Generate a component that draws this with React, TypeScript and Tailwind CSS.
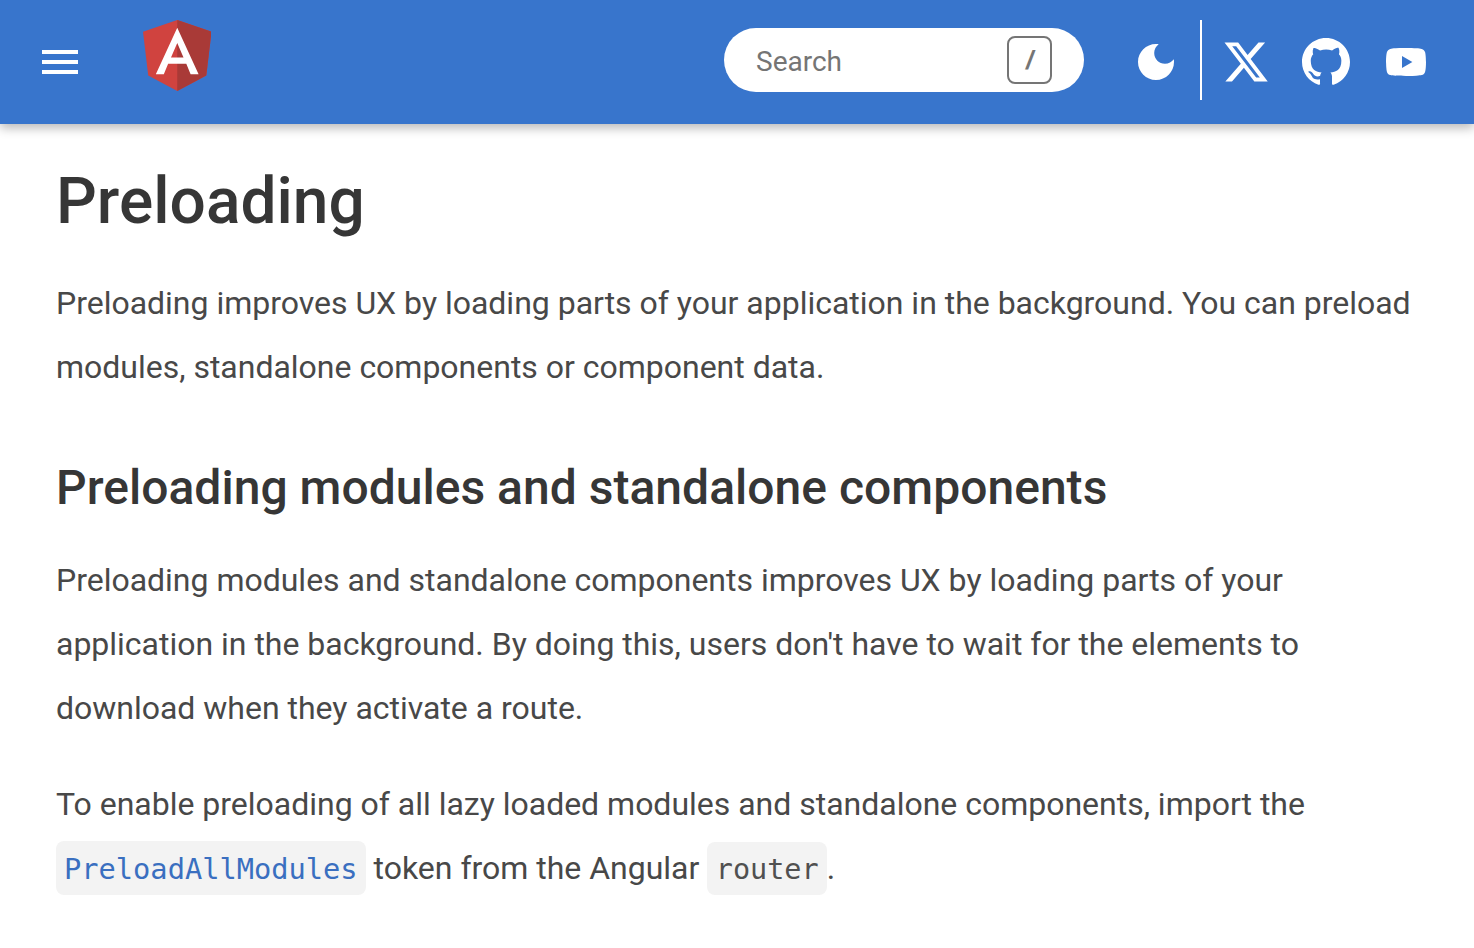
export default function App() {
  return (
    <div className="min-h-[948px] bg-white font-['Roboto',sans-serif] text-[#484848]">
      <header className="flex h-[124px] items-center bg-[#3875cc] pl-[42px] pr-[44px] shadow-[0_4px_10px_rgba(0,0,0,0.28)]">
        <div className="flex w-[36px] flex-col gap-[6px]">
          <span className="h-[4px] bg-white" />
          <span className="h-[4px] bg-white" />
          <span className="h-[4px] bg-white" />
        </div>
        <svg viewBox="31.9 30 186.2 200" preserveAspectRatio="none" className="mb-[14px] ml-[64.5px] h-[71px] w-[68.5px]">
          <polygon fill="#d0433f" points="125,30 31.9,63.2 46.1,186.3 125,230 203.9,186.3 218.1,63.2" />
          <polygon fill="#a93a37" points="125,30 125,230 203.9,186.3 218.1,63.2" />
          <path fill="#fff" fillRule="evenodd" d="M125,52.1L66.8,182.6h21.7l11.7-29.2h49.4l11.7,29.2h21.7L125,52.1z M142,135.4H108l17-40.9L142,135.4z" />
        </svg>
        <div className="mb-[4px] ml-[513px] flex h-[64px] w-[360px] items-center justify-between rounded-full bg-white pl-[32px] pr-[32px]">
          <span className="pt-[4px] text-[28px] text-[#757575]">Search</span>
          <span className="flex h-[48px] w-[45px] items-center justify-center rounded-[8px] border-2 border-[#757575] font-['Liberation_Sans',sans-serif] text-[26px] font-bold italic text-[#757575]">/</span>
        </div>
        <svg viewBox="0 0 24 24" className="ml-[48px] h-[48px] w-[48px] fill-white">
          <path d="M12 3c-4.97 0-9 4.03-9 9s4.03 9 9 9 9-4.03 9-9c0-.46-.04-.92-.1-1.36-.98 1.37-2.58 2.26-4.4 2.26-2.98 0-5.4-2.42-5.4-5.4 0-1.81.89-3.42 2.26-4.4-.44-.06-.9-.1-1.36-.1z" />
        </svg>
        <span className="mb-[4px] ml-[20px] h-[80px] w-[2px] bg-white" />
        <svg viewBox="0 0 512 512" className="ml-[20px] h-[48px] w-[48px] fill-white">
          <path d="M389.2 48h70.6L305.6 224.2 487.8 464H345L233.7 318.6 106.5 464H35.8L200.7 275.5 26.8 48H172.4L272.9 180.9 389.2 48zM364.4 421.8h39.1L151.1 88h-42L364.4 421.8z" />
        </svg>
        <svg viewBox="0 0 16 16" className="ml-[32px] h-[48px] w-[48px] fill-white">
          <path d="M8 0C3.58 0 0 3.58 0 8c0 3.54 2.29 6.53 5.47 7.59.4.07.55-.17.55-.38 0-.19-.01-.82-.01-1.49-2.01.37-2.53-.49-2.69-.94-.09-.23-.48-.94-.82-1.13-.28-.15-.68-.52-.01-.53.63-.01 1.08.58 1.23.82.72 1.21 1.87.87 2.33.66.07-.52.28-.87.51-1.07-1.78-.2-3.64-.89-3.64-3.95 0-.87.31-1.59.82-2.15-.08-.2-.36-1.02.08-2.12 0 0 .67-.21 2.2.82.64-.18 1.32-.27 2-.27.68 0 1.36.09 2 .27 1.53-1.04 2.2-.82 2.2-.82.44 1.1.16 1.92.08 2.12.51.56.82 1.27.82 2.15 0 3.07-1.87 3.75-3.65 3.95.29.25.54.73.54 1.48 0 1.07-.01 1.93-.01 2.2 0 .21.15.46.55.38A8.013 8.013 0 0016 8c0-4.42-3.58-8-8-8z" />
        </svg>
        <svg viewBox="0 0 24 24" className="ml-[32px] h-[48px] w-[48px] fill-white">
          <path d="M10,15L15.19,12L10,9V15M21.56,7.17C21.69,7.64 21.78,8.27 21.84,9.07C21.91,9.87 21.94,10.56 21.94,11.16L22,12C22,14.19 21.84,15.8 21.56,16.83C21.31,17.73 20.73,18.31 19.83,18.56C19.36,18.69 18.5,18.78 17.18,18.84C15.88,18.91 14.69,18.94 13.59,18.94L12,19C7.81,19 5.2,18.84 4.17,18.56C3.27,18.31 2.69,17.73 2.44,16.83C2.31,16.36 2.22,15.73 2.16,14.93C2.09,14.13 2.06,13.44 2.06,12.84L2,12C2,9.81 2.16,8.2 2.44,7.17C2.69,6.27 3.27,5.69 4.17,5.44C4.64,5.31 5.5,5.22 6.82,5.16C8.12,5.09 9.31,5.06 10.41,5.06L12,5C16.19,5 18.8,5.16 19.83,5.44C20.73,5.69 21.31,6.27 21.56,7.17Z" />
        </svg>
      </header>
      <main className="px-[56px] text-[32px] leading-[64px] tracking-[-0.012px]">
        <h1 className="pt-[38px] text-[64px] font-medium leading-[80px] tracking-[0.02px] text-[#363636]">Preloading</h1>
        <p className="mt-[29px]">
          Preloading improves UX by loading parts of your application in the background. You can preload modules, standalone components or component data.
        </p>
        <h2 className="mt-[57px] text-[48px] font-medium leading-[64px] tracking-[0.02px] text-[#363636]">Preloading modules and standalone components</h2>
        <p className="mt-[28px]">
          Preloading modules and standalone components improves UX by loading parts of your application in the background. By doing this, users don't have to wait for the elements to download when they activate a route.
        </p>
        <p className="mt-[32px]">
          To enable preloading of all lazy loaded modules and standalone components, import the{" "}
          <code className="rounded-[8px] bg-[#f3f3f3] px-[8px] pb-[9px] pt-[11px] font-['DejaVu_Sans_Mono',monospace] text-[28.7px] tracking-normal text-[#3a6fc0]">PreloadAllModules</code>{" "}
          token from the Angular{" "}
          <code className="rounded-[8px] bg-[#f3f3f3] pb-[9px] pl-[8.5px] pr-[8px] pt-[11px] font-['DejaVu_Sans_Mono',monospace] text-[28.5px] tracking-normal text-[#505050]">router</code>.
        </p>
      </main>
    </div>
  );
}
